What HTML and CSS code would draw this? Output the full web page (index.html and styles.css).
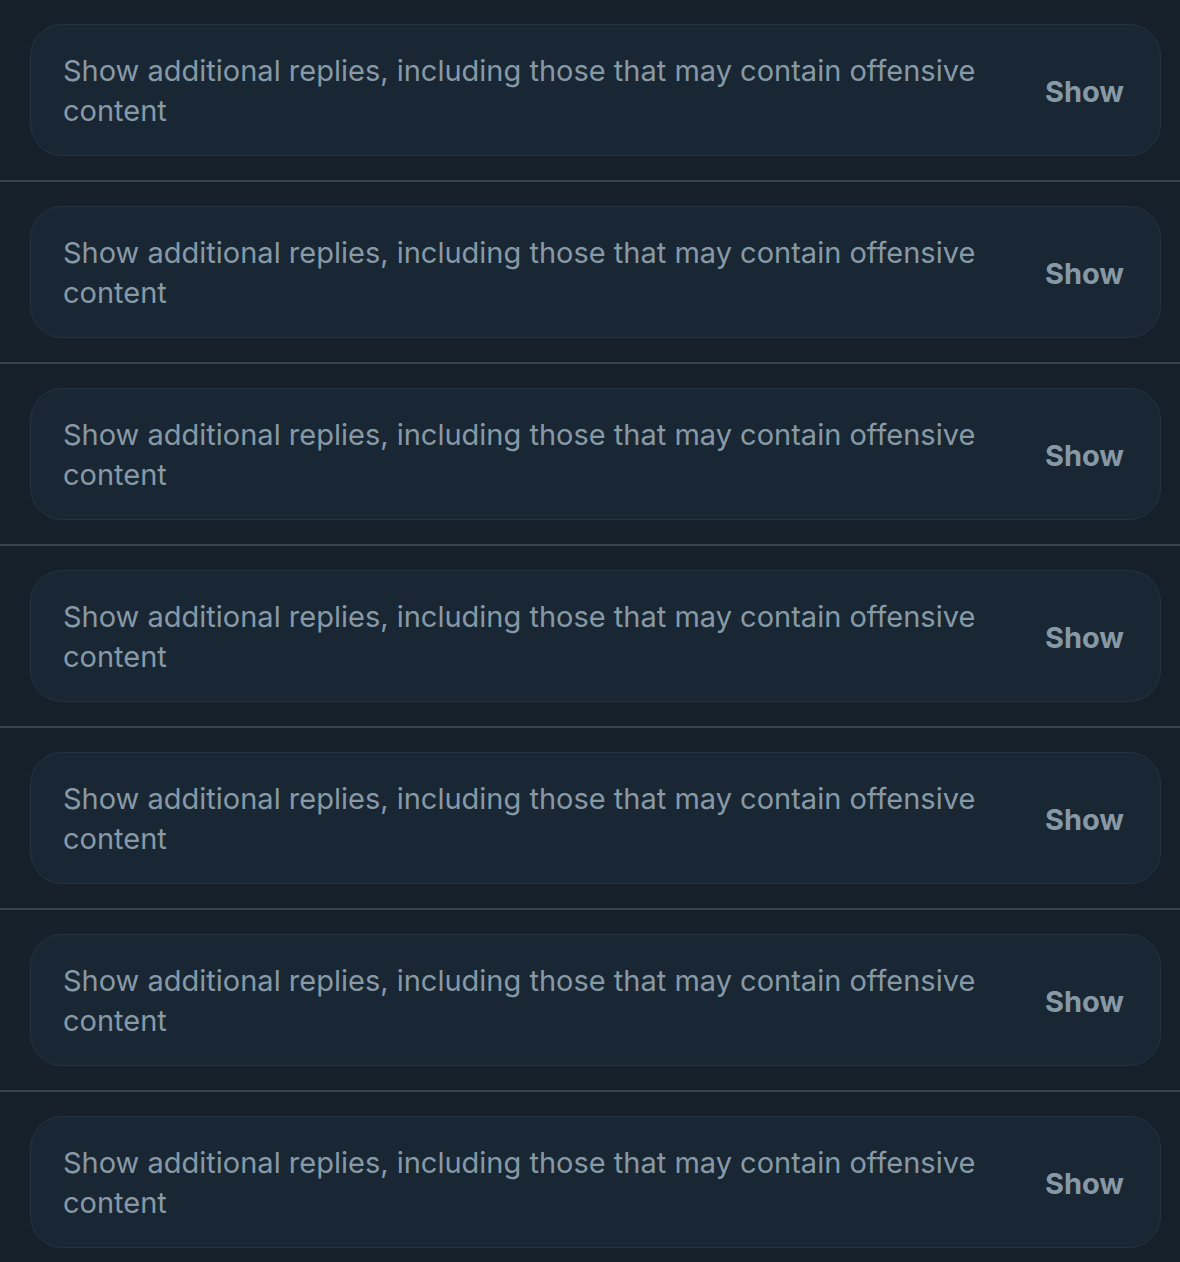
FILE: index.html
```html
<!DOCTYPE html>
<html lang="en">
<head>
  <meta charset="UTF-8">
  <meta name="viewport" content="width=device-width, initial-scale=1.0">
  <title>Replies</title>
  <link rel="stylesheet" href="styles.css">
</head>
<body>
  <div class="list">
    <div class="row">
      <div class="notice">
        <span class="notice-text">Show additional replies, including those that may contain offensive content</span>
        <button class="show-btn">Show</button>
      </div>
    </div>
    <div class="row">
      <div class="notice">
        <span class="notice-text">Show additional replies, including those that may contain offensive content</span>
        <button class="show-btn">Show</button>
      </div>
    </div>
    <div class="row">
      <div class="notice">
        <span class="notice-text">Show additional replies, including those that may contain offensive content</span>
        <button class="show-btn">Show</button>
      </div>
    </div>
    <div class="row">
      <div class="notice">
        <span class="notice-text">Show additional replies, including those that may contain offensive content</span>
        <button class="show-btn">Show</button>
      </div>
    </div>
    <div class="row">
      <div class="notice">
        <span class="notice-text">Show additional replies, including those that may contain offensive content</span>
        <button class="show-btn">Show</button>
      </div>
    </div>
    <div class="row">
      <div class="notice">
        <span class="notice-text">Show additional replies, including those that may contain offensive content</span>
        <button class="show-btn">Show</button>
      </div>
    </div>
    <div class="row">
      <div class="notice">
        <span class="notice-text">Show additional replies, including those that may contain offensive content</span>
        <button class="show-btn">Show</button>
      </div>
    </div>
  </div>
</body>
</html>
```

FILE: styles.css
```css
/* General Styles */
body {
  margin: 0;
  padding: 0;
  background-color: #15202b;
  font-family: Inter, "Noto Sans", Arial, sans-serif;
}

/* Rows */
.row {
  padding: 24px 19px 24px 30px;
  border-bottom: 2px solid #38444d;
}

.row:last-child {
  border-bottom: none;
}

/* Notice Card */
.notice {
  display: flex;
  align-items: center;
  justify-content: space-between;
  gap: 40px;
  padding: 26px 36px 24px 32px;
  background-color: #192734;
  border: 1px solid #253341;
  border-radius: 32px;
}

.notice-text {
  color: #8899a6;
  font-size: 29px;
  line-height: 40px;
  max-width: 940px;
}

.show-btn {
  background: none;
  border: none;
  padding: 0;
  color: #8899a6;
  font-family: inherit;
  font-size: 29px;
  font-weight: bold;
  cursor: pointer;
}
```
